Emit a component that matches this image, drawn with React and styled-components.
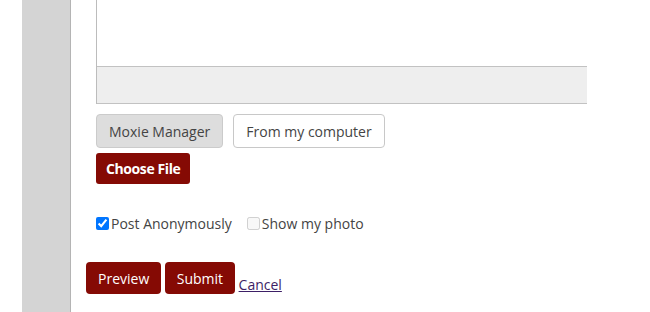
import React from "react";
import styled, { createGlobalStyle } from "styled-components";

const Global = createGlobalStyle`
  html, body { margin: 0; padding: 0; background: #fff; }
  body { font-family: "Open Sans", "Liberation Sans", sans-serif; overflow: hidden; }
`;

const Page = styled.div`
  display: flex;
  height: 312px;
  width: 650px;
`;

const Gutter = styled.div`
  width: 22px;
  flex: none;
`;

const Sidebar = styled.div`
  width: 48px;
  flex: none;
  background: #d4d4d4;
  border-right: 1px solid #b4b4b4;
`;

const Main = styled.div`
  flex: 1;
  padding-left: 15px;
  display: flex;
  flex-direction: column;
`;

const Upload = styled.div`
  padding-left: 10px;
  display: flex;
  flex-direction: column;
`;

const Editor = styled.div`
  width: 490px;
  border-left: 1px solid #bcbcbc;
  display: flex;
  flex-direction: column;
`;

const EditArea = styled.div`
  height: 66px;
  background: #fff;
`;

const StatusBar = styled.div`
  height: 36px;
  background: #eeeeee;
  border-top: 1px solid #c2c2c2;
  border-bottom: 1px solid #c2c2c2;
`;

const SourceRow = styled.div`
  display: flex;
  gap: 10px;
  margin-top: 10px;
`;

const SourceButton = styled.button`
  font-family: "Open Sans", "Liberation Sans", sans-serif;
  font-size: 14px;
  color: #444;
  height: 34px;
  padding: 0 12px;
  border-radius: 4px;
  border: 1px solid ${(p) => (p.$active ? "#cbcbcb" : "#c8c8c8")};
  background: ${(p) => (p.$active ? "#dddddd" : "#ffffff")};
  cursor: pointer;
`;

const ChooseButton = styled.button`
  align-self: flex-start;
  margin-top: 5px;
  font-family: "Open Sans", "Liberation Sans", sans-serif;
  font-weight: 700;
  font-size: 14px;
  letter-spacing: -0.4px;
  color: #fff;
  background: #850a04;
  border: none;
  border-radius: 3px;
  height: 31px;
  padding: 0 10px;
`;

const OptionsRow = styled.div`
  display: flex;
  align-items: center;
  margin-top: 30px;
  gap: 15px;
`;

const Option = styled.label`
  display: flex;
  align-items: center;
  font-size: 14px;
  color: #444;
  gap: 2px;
`;

const Check = styled.input`
  width: 13px;
  height: 13px;
  margin: 0;
  accent-color: #0075ff;
`;

const ActionRow = styled.div`
  display: flex;
  align-items: flex-end;
  gap: 4px;
  margin-top: 29px;
`;

const ActionButton = styled.button`
  font-family: "Open Sans", "Liberation Sans", sans-serif;
  font-size: 14px;
  color: #fff;
  background: #850a04;
  border: none;
  border-radius: 4px;
  height: 32px;
  padding: 0 12px;
  &:last-of-type { padding: 0 11.5px; }
`;

const CancelLink = styled.a`
  font-size: 14px;
  line-height: 19px;
  color: #3d1f66;
  text-decoration: underline;
`;

export default function App() {
  return (
    <>
      <Global />
      <Page>
        <Gutter />
        <Sidebar />
        <Main>
          <Upload>
            <Editor>
              <EditArea />
              <StatusBar />
            </Editor>
            <SourceRow>
              <SourceButton $active>Moxie Manager</SourceButton>
              <SourceButton>From my computer</SourceButton>
            </SourceRow>
            <ChooseButton>Choose File</ChooseButton>
            <OptionsRow>
              <Option>
                <Check type="checkbox" defaultChecked />
                Post Anonymously
              </Option>
              <Option>
                <Check type="checkbox" disabled />
                Show my photo
              </Option>
            </OptionsRow>
          </Upload>
          <ActionRow>
            <ActionButton>Preview</ActionButton>
            <ActionButton>Submit</ActionButton>
            <CancelLink href="#">Cancel</CancelLink>
          </ActionRow>
        </Main>
      </Page>
    </>
  );
}
